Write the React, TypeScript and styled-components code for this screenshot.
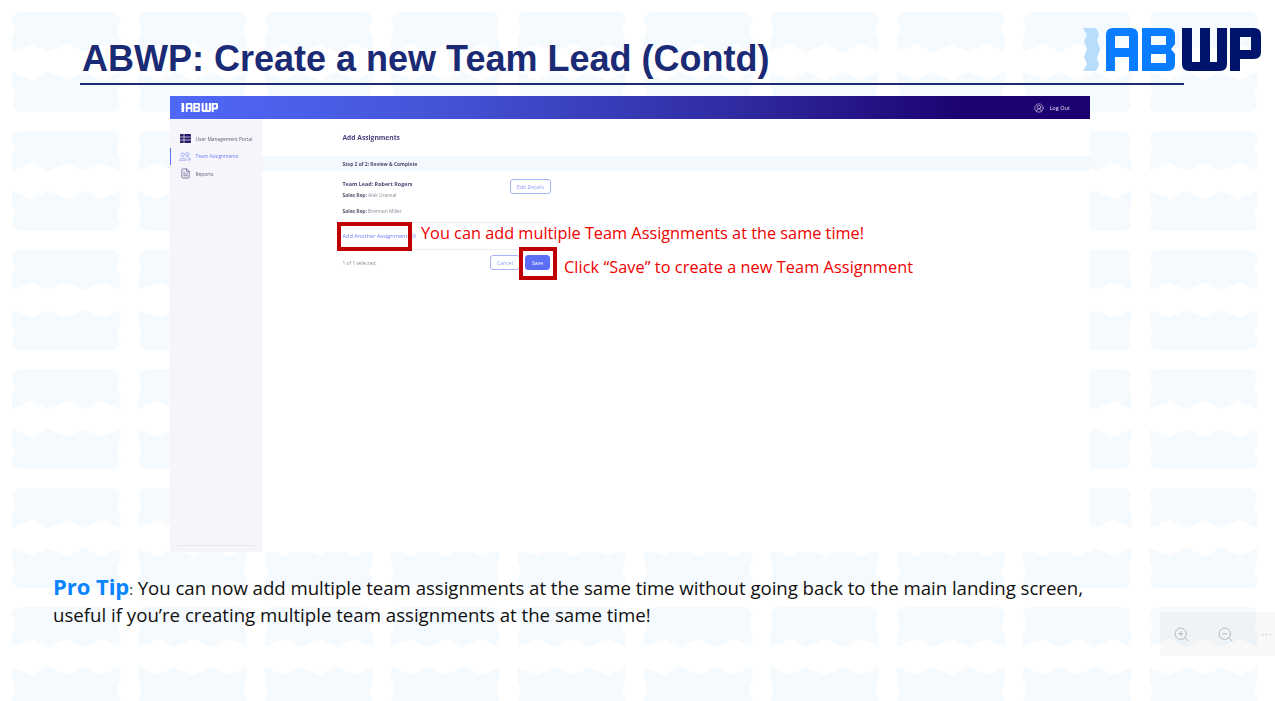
import { FC } from "react";
import styled, { createGlobalStyle } from "styled-components";
import { FileText, PlusCircle, UserCircle2, ZoomIn, ZoomOut } from "lucide-react";

const GlobalStyle = createGlobalStyle`
  html, body {
    margin: 0;
    padding: 0;
    background: #fff;
  }
`;

const Slide = styled.div`
  position: relative;
  width: 1275px;
  height: 701px;
  overflow: hidden;
  background: #fff;
  font-family: "Open Sans", sans-serif;
`;

const PatternLayer = styled.svg`
  position: absolute;
  inset: 0;
  width: 100%;
  height: 100%;
`;

const Content = styled.div`
  position: relative;
  display: flex;
  flex-direction: column;
`;

const TitleBar = styled.div`
  display: flex;
  align-items: flex-end;
  height: 85px;
  margin: 0 91px 0 80px;
  padding: 0 0 2px 2px;
  box-sizing: border-box;
  border-bottom: 2px solid #1d2a78;
`;

const Title = styled.h1`
  margin: 0;
  font-family: "Liberation Sans", Arial, sans-serif;
  font-size: 36px;
  line-height: 44px;
  font-weight: 700;
  color: #1b2a74;
  white-space: nowrap;
`;

const LogoSlot = styled.div`
  position: absolute;
  top: 28px;
  left: 1083px;
  line-height: 0;
`;

const Panel = styled.div`
  position: relative;
  width: 920px;
  height: 456px;
  margin: 11px 0 0 170px;
  background: #fff;
  display: flex;
  flex-direction: column;
`;

const Shot = styled.div`
  flex: 1;
  display: flex;
  flex-direction: column;
  min-height: 0;
  filter: blur(0.3px);
`;

const Header = styled.div`
  height: 23px;
  flex: none;
  display: flex;
  align-items: center;
  justify-content: space-between;
  padding: 0 20px 0 11px;
  box-sizing: border-box;
  background: linear-gradient(90deg, #5068f8 0%, #4555d9 28%, #2f2aa0 62%, #1c0272 86%, #1b0070 100%);
`;

const LogOut = styled.div`
  display: flex;
  align-items: center;
  gap: 5px;
  font-size: 5.6px;
  color: #e8e6f5;
`;

const Body = styled.div`
  flex: 1;
  display: flex;
  min-height: 0;
`;

const Sidebar = styled.div`
  position: relative;
  width: 92px;
  flex: none;
  box-sizing: border-box;
  padding-top: 11px;
  background: #f6f5fb;
  display: flex;
  flex-direction: column;
`;

const NavItem = styled.div<{ $active?: boolean }>`
  height: 17.5px;
  display: flex;
  align-items: center;
  gap: 4.5px;
  padding-left: 8px;
  font-size: 4.9px;
  color: ${(p) => (p.$active ? "#6d7ff5" : "#5f5d75")};
  border-left: 1.5px solid ${(p) => (p.$active ? "#5b6ef5" : "transparent")};
  box-sizing: border-box;
  white-space: nowrap;
`;

const NavIcon = styled.span`
  width: 12px;
  display: flex;
  justify-content: center;
  line-height: 0;
`;

const SideRule = styled.div`
  position: absolute;
  left: 7px;
  right: 7px;
  bottom: 6px;
  height: 1px;
  background: #e9e8ef;
`;

const Main = styled.div`
  flex: 1;
  display: flex;
  flex-direction: column;
  min-width: 0;
`;

const PageTitle = styled.div`
  height: 37px;
  display: flex;
  align-items: center;
  padding: 0 0 0 80.5px;
  font-size: 6.7px;
  font-weight: 700;
  color: #4a4580;
`;

const StepBar = styled.div`
  height: 15px;
  display: flex;
  align-items: center;
  padding-left: 80.5px;
  background: #f3f8fd;
  font-size: 4.9px;
  font-weight: 700;
  color: #4c4a70;
`;

const Form = styled.div`
  width: 208.5px;
  margin-left: 80.5px;
  display: flex;
  flex-direction: column;
`;

const LeadRow = styled.div`
  display: flex;
  justify-content: space-between;
  align-items: flex-start;
  height: 51px;
  padding-top: 8px;
  box-sizing: border-box;
`;

const LeadText = styled.div`
  display: flex;
  flex-direction: column;
`;

const LeadName = styled.div`
  font-size: 5.4px;
  line-height: 10px;
  font-weight: 700;
  color: #4a4872;
`;

const Rep = styled.div<{ $gap: number }>`
  margin-top: ${(p) => p.$gap}px;
  font-size: 4.9px;
  line-height: 7px;
  color: #8d8c9c;

  b {
    color: #55536d;
  }
`;

const Button = styled.div<{ $primary?: boolean; $width: number }>`
  width: ${(p) => p.$width}px;
  height: 15px;
  flex: none;
  display: flex;
  align-items: center;
  justify-content: center;
  box-sizing: border-box;
  border-radius: 3px;
  font-size: 5.2px;
  color: ${(p) => (p.$primary ? "#fff" : "#8f9cf5")};
  background: ${(p) => (p.$primary ? "#5b6ef5" : "#fff")};
  border: 1px solid ${(p) => (p.$primary ? "#5b6ef5" : "#a9b4f8")};
`;

const AddRow = styled.div`
  height: 28px;
  display: flex;
  align-items: center;
  gap: 3px;
  box-sizing: border-box;
  border-top: 1px solid #eeeef2;
  border-bottom: 1px solid #eeeef2;
  font-size: 5.6px;
  color: #6d7ff5;
`;

const FooterRow = styled.div`
  margin-top: 5px;
  display: flex;
  align-items: center;
  font-size: 4.9px;
  color: #8d8c9c;
`;

const Selected = styled.div`
  flex: 1;
`;

const FooterButtons = styled.div`
  display: flex;
  gap: 5px;
  margin-right: 1px;
`;

const Highlight = styled.div<{ $left: number; $top: number; $w: number; $h: number }>`
  position: absolute;
  left: ${(p) => p.$left}px;
  top: ${(p) => p.$top}px;
  width: ${(p) => p.$w}px;
  height: ${(p) => p.$h}px;
  box-sizing: border-box;
  border: 4px solid #c00000;
`;

const Note = styled.div<{ $left: number; $top: number; $spacing?: number }>`
  position: absolute;
  left: ${(p) => p.$left}px;
  top: ${(p) => p.$top}px;
  font-size: 16.3px;
  line-height: 22px;
  letter-spacing: ${(p) => p.$spacing ?? 0}px;
  color: #f00000;
  white-space: nowrap;
`;

const Tip = styled.div`
  margin: 22px 0 0 53px;
  font-size: 18.65px;
  line-height: 27px;
  color: #111;
  white-space: nowrap;
`;

const TipFirstLine = styled.div`
  letter-spacing: -0.04px;
`;

const TipLabel = styled.span`
  font-size: 22px;
  line-height: 0;
  font-weight: 700;
  color: #0a84ff;
`;

const TipColon = styled.span`
  font-size: 14px;
  line-height: 0;
`;

const ZoomBar = styled.div`
  position: absolute;
  left: 1160px;
  top: 612px;
  width: 115px;
  height: 44px;
  display: flex;
  align-items: center;
  padding-left: 13px;
  gap: 27px;
  box-sizing: border-box;
  background: rgba(120, 120, 120, 0.05);
  color: #a9a9a9;
`;

const More = styled.span`
  font-size: 10px;
  letter-spacing: 0.5px;
  color: #b5b5b5;
  font-family: "Liberation Sans", sans-serif;
`;

const TILE =
  "M10 0H98Q108 0 108 9Q102 18 108 26V40L90 32L72 40L55 32L36 40L20 32L0 40V26Q6 18 0 9Q0 0 10 0Z" +
  "M0 60L20 68L36 60L55 68L72 60L90 68L108 60V74Q102 82 108 91Q108 100 98 100H10Q0 100 0 91Q6 82 0 74Z";

const Background: FC = () => (
  <PatternLayer viewBox="0 0 1275 701">
    <defs>
      <pattern id="tiles" x="12" y="12" width="126.4" height="119" patternUnits="userSpaceOnUse">
        <path d={TILE} fill="#f5fafe" />
      </pattern>
    </defs>
    <rect width="1275" height="701" fill="url(#tiles)" />
  </PatternLayer>
);

// letters are built from the same 9px bars as the wordmark
const Logo: FC<{ width: number; mark: string; first: string; second: string }> = ({
  width,
  mark,
  first,
  second,
}) => (
  <svg width={width} viewBox="0 0 178 43">
    <path
      d="M0 0H13L16 6L14 12L17 21L14 30L16 37L13 43H0L4 36L1 29L4 21L1 13L4 7Z"
      fill={mark}
    />
    <path
      fillRule="evenodd"
      fill={first}
      d="M23 43V7Q23 0 30 0H48Q55 0 55 7V43H46V29H32V43ZM32 8V20H46V8Z"
    />
    <path
      fillRule="evenodd"
      fill={first}
      d="M59 0H85Q92 0 92 7V16L88 21L92 26V36Q92 43 85 43H59ZM68 8V17H83V8ZM68 26V35H83V26Z"
    />
    <path
      fill={second}
      d="M99 0H109V34H117V0H127V34H134V0H144V36Q144 43 137 43H106Q99 43 99 36Z"
    />
    <path
      fillRule="evenodd"
      fill={second}
      d="M147 0H171Q178 0 178 7V24Q178 31 171 31H157V43H147ZM157 9V22H168V9Z"
    />
  </svg>
);

const TableIcon: FC = () => (
  <svg width="11" height="9" viewBox="0 0 11 9">
    <rect width="11" height="9" rx="1" fill="#241a66" />
    <path d="M4 0V9M0 3H11M0 6H11" stroke="#f6f5fb" strokeWidth="0.7" />
  </svg>
);

const TeamIcon: FC = () => (
  <svg width="13" height="9" viewBox="0 0 13 9" fill="none" stroke="#7d8df6" strokeWidth="0.7">
    <circle cx="4" cy="2.5" r="1.8" />
    <circle cx="9" cy="2" r="1.8" />
    <path d="M0.6 8.6C0.8 5.6 7.2 5.6 7.4 8.6Z" />
    <path d="M8 5.2C10 4.6 12.3 5.6 12.4 8.2H8.6" />
  </svg>
);

export default function App() {
  return (
    <Slide>
      <GlobalStyle />
      <Background />
      <Content>
        <TitleBar>
          <Title>ABWP: Create a new Team Lead (Contd)</Title>
        </TitleBar>
        <Panel>
          <Shot>
            <Header>
              <Logo width={37} mark="#ffffff" first="#ffffff" second="#ffffff" />
              <LogOut>
                <UserCircle2 size={10} strokeWidth={1.4} />
                Log Out
              </LogOut>
            </Header>
            <Body>
              <Sidebar>
                <NavItem>
                  <NavIcon><TableIcon /></NavIcon>
                  User Management Portal
                </NavItem>
                <NavItem $active>
                  <NavIcon><TeamIcon /></NavIcon>
                  Team Assignments
                </NavItem>
                <NavItem>
                  <NavIcon><FileText size={11} strokeWidth={1.3} color="#3a3470" /></NavIcon>
                  Reports
                </NavItem>
                <SideRule />
              </Sidebar>
              <Main>
                <PageTitle>Add Assignments</PageTitle>
                <StepBar>Step 2 of 2: Review &amp; Complete</StepBar>
                <Form>
                  <LeadRow>
                    <LeadText>
                      <LeadName>Team Lead: Robert Rogers</LeadName>
                      <Rep $gap={3}><b>Sales Rep:</b> Alek Uransal</Rep>
                      <Rep $gap={9}><b>Sales Rep:</b> Brennan Miller</Rep>
                    </LeadText>
                    <Button $width={41}>Edit Details</Button>
                  </LeadRow>
                  <AddRow>
                    Add Another Assignment
                    <PlusCircle size={6} strokeWidth={1.5} />
                  </AddRow>
                  <FooterRow>
                    <Selected>1 of 1 selected.</Selected>
                    <FooterButtons>
                      <Button $width={30}>Cancel</Button>
                      <Button $primary $width={25}>Save</Button>
                    </FooterButtons>
                  </FooterRow>
                </Form>
              </Main>
            </Body>
          </Shot>
        </Panel>
        <Tip>
          <TipFirstLine>
            <TipLabel>Pro Tip</TipLabel><TipColon>:</TipColon> You can now add multiple team assignments at the same time without going back to the main landing screen,
          </TipFirstLine>
          <div>useful if you’re creating multiple team assignments at the same time!</div>
        </Tip>
      </Content>
      <LogoSlot>
        <Logo width={178} mark="#b8dcfb" first="#0a7cff" second="#00146b" />
      </LogoSlot>
      <Highlight $left={337} $top={222} $w={75} $h={29} />
      <Highlight $left={519} $top={247} $w={38} $h={33} />
      <Note $left={421} $top={222}>You can add multiple Team Assignments at the same time!</Note>
      <Note $left={564} $top={256} $spacing={0.07}>Click “Save” to create a new Team Assignment</Note>
      <ZoomBar>
        <ZoomIn size={17} strokeWidth={1.1} />
        <ZoomOut size={17} strokeWidth={1.1} />
        <More>···</More>
      </ZoomBar>
    </Slide>
  );
}
